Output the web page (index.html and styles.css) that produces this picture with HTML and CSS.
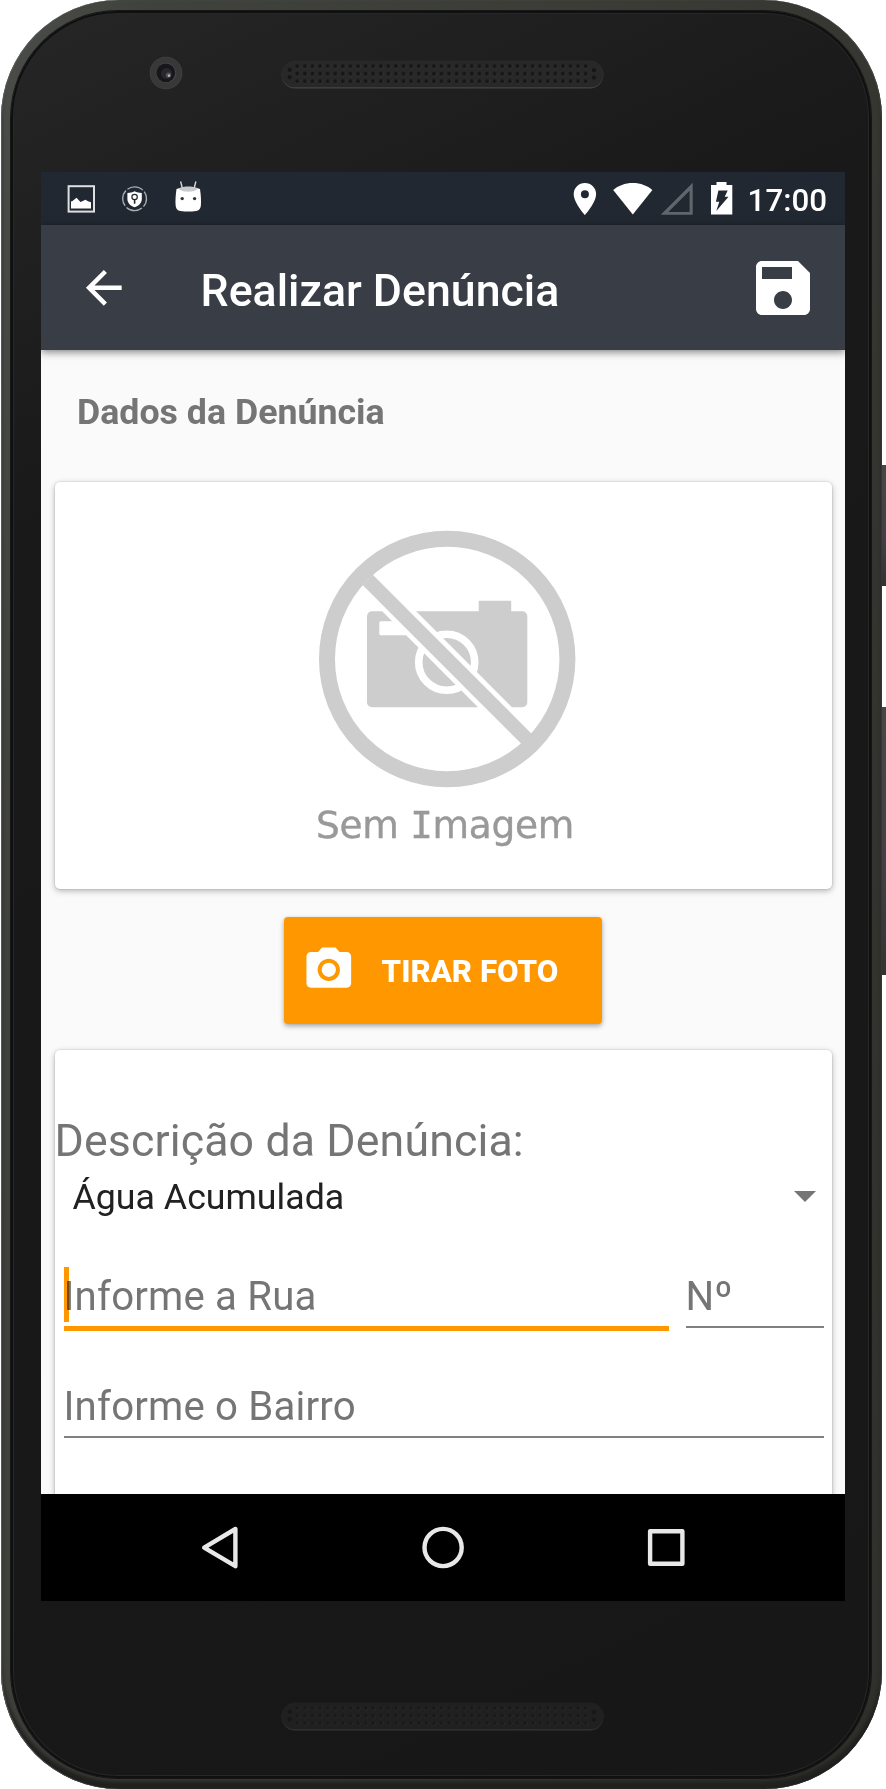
FILE: index.html
```html
<!DOCTYPE html>
<html lang="pt-BR">
<head>
<meta charset="utf-8">
<title>Realizar Denúncia</title>
<link rel="stylesheet" href="styles.css">
</head>
<body>
<div class="device">
  <span class="side-button power"></span>
  <span class="side-button volume"></span>
  <div class="face">
    <div class="bezel-top">
      <svg class="lens" width="34" height="34" viewBox="0 0 34 34">
        <circle cx="17" cy="17" r="16.3" fill="#404040"/>
        <circle cx="17" cy="17" r="15.4" fill="#383838"/>
        <circle cx="17" cy="17" r="10" fill="#4c4c4c"/>
        <circle cx="16.8" cy="16.8" r="9.4" fill="#17171a"/>
        <circle cx="17.5" cy="17.5" r="5.5" fill="#28272d"/>
        <circle cx="19.5" cy="19" r="2.6" fill="#55555a"/>
        <circle cx="20" cy="19.7" r="1.1" fill="#c8c8c8"/>
      </svg>
      <svg class="grille" width="323" height="30" viewBox="0 0 323 30">
        <defs>
          <pattern id="dots" x="12.6" y="2.4" width="7.59" height="7.55" patternUnits="userSpaceOnUse">
            <circle cx="3.9" cy="4.1" r="2.3" fill="#3b3b3b"/>
            <circle cx="3.7" cy="3.7" r="2.1" fill="#171717"/>
          </pattern>
        </defs>
        <rect x=".5" y="1.2" width="322" height="27.2" rx="13.6" fill="#444"/>
        <rect x=".5" y=".5" width="322" height="26.8" rx="13.4" fill="#282828"/>
        <rect x="12.6" y="2.4" width="296" height="22.65" fill="url(#dots)"/>
        <g fill="#171717"><circle cx="8.7" cy="9.8" r="2.1"/><circle cx="8.7" cy="17.2" r="2.1"/><circle cx="313" cy="10.2" r="2.1"/><circle cx="313" cy="17.6" r="2.1"/></g>
      </svg>
    </div>

    <div class="screen">
      <div class="status-bar">
        <svg width="804" height="53" viewBox="41 172 804 53">
          <rect x="68.6" y="186.2" width="25.4" height="25.4" fill="none" stroke="#dedfe0" stroke-width="2"/>
          <path d="M71 208.500v-7l1.500-.5 4-3.200 4 4.200 5-2.200 2.500 1.500 3 1v6.200z" fill="#fff"/>
          <circle cx="134.6" cy="198.7" r="11.9" fill="none" stroke="#adb0b4" stroke-width="1.3" stroke-dasharray="16.7 2" stroke-dashoffset="8"/>
          <path d="M134.600 191.200c-2 1.200-4.600 1.700-7.200 1.700v6c0 4 3.200 6.900 7.200 8.400 4-1.500 7.200-4.400 7.200-8.400v-6c-2.600 0-5.200-.5-7.200-1.700z" fill="#fff"/>
          <circle cx="134.6" cy="197" r="2.7" fill="none" stroke="#222831" stroke-width="1.2"/>
          <path d="M134.600 199.500v4.200" stroke="#222831" stroke-width="1.6"/>
          <path d="M180.600 181.500l2 7.500M195.900 181.500l-2 7.500" stroke="#d8d9da" stroke-width="1.4"/>
          <path d="M176.500 189c7-2.500 17.500-2.500 23.500 0q1.400 10 .9 16c-.3 4-2 5.500-4.900 6-5 .8-10.500.8-15.500 0-3-.5-4.600-2-4.900-6q-.5-6 .9-16z" fill="#fff"/>
          <path d="M178.500 188.300c6-2.300 13.800-2.300 19.500 0-1.500 4.500-18 4.500-19.500 0z" fill="#c9cacb"/>
          <circle cx="182.2" cy="198.6" r="1.7" fill="#303640"/><circle cx="194.6" cy="198.6" r="1.7" fill="#303640"/>
          <path d="M584.900 183a11.200 11.200 0 0 0-11.200 11.200c0 8.400 11.200 20.800 11.200 20.800s11.200-12.400 11.200-20.800A11.200 11.200 0 0 0 584.900 183zm0 15.200a4 4 0 1 1 0-8 4 4 0 0 1 0 8z" fill="#fff"/>
          <path d="M632.800 214.600L613.200 190c5-4.300 11.800-7 19.600-7s14.600 2.700 19.600 7z" fill="#fff"/>
          <path d="M660.700 214.800h32v-32zM668.300 212h21.300v-21.300z" fill="#61656c" fill-rule="evenodd"/>
          <path d="M716.500 182h10v3h5.800v29.600H711V185h5.500zM718.400 190.500h9.300l-3 6.300h3.800l-12.200 14.200 3-9.300h-3.400z" fill="#fff" fill-rule="evenodd"/>
        </svg>
        <span class="clock">17:00</span>
      </div>

      <header class="app-bar">
        <svg class="back" width="53.6" height="53.6" viewBox="0 0 24 24"><path fill="#fff" d="M20 11H7.830l5.590-5.590L12 4l-8 8 8 8 1.410-1.410L7.830 13H20v-2z"/></svg>
        <h1 class="title">Realizar Denúncia</h1>
        <svg class="save" width="72" height="72" viewBox="0 0 24 24"><path fill="#fff" d="M17 3H5c-1.110 0-2 .9-2 2v14c0 1.100.89 2 2 2h14c1.100 0 2-.9 2-2V7l-4-4zm-5 16c-1.660 0-3-1.340-3-3s1.340-3 3-3 3 1.340 3 3-1.340 3-3 3zm3-10H5V5h10v4z"/></svg>
      </header>

      <main class="content">
        <h2 class="section-title">Dados da Denúncia</h2>

        <section class="card photo-card">
          <svg width="260" height="260" viewBox="316 528.5 260 260">
            <g fill="#cdcdcd">
              <rect x="366" y="610.7" width="160.3" height="96" rx="5"/>
              <rect x="477.7" y="600.3" width="32.5" height="14" rx="1"/>
            </g>
            <rect x="378.3" y="620.7" width="40" height="14" rx="1.5" fill="#fff"/>
            <circle cx="445.7" cy="661.7" r="28" fill="none" stroke="#fff" stroke-width="7.6"/>
            <path d="M366.700 579.300L525.700 738.500" stroke="#fff" stroke-width="24"/>
            <path d="M366.700 579.300L525.700 738.500" stroke="#cdcdcd" stroke-width="14.4"/>
            <circle cx="446.2" cy="658.5" r="120.2" fill="none" stroke="#cdcdcd" stroke-width="16"/>
          </svg>
          <p class="caption">Sem <span class="slab">I</span>magem</p>
        </section>

        <button class="photo-button" type="button">
          <svg width="53.6" height="53.6" viewBox="0 0 24 24"><circle cx="12" cy="12" r="3.2" fill="#fff"/><path fill="#fff" d="M9 2L7.170 4H4c-1.100 0-2 .9-2 2v12c0 1.100.9 2 2 2h16c1.100 0 2-.9 2-2V6c0-1.100-.9-2-2-2h-3.170L15 2H9zm3 15c-2.760 0-5-2.240-5-5s2.240-5 5-5 5 2.240 5 5-2.240 5-5 5z"/></svg>
          <span class="photo-label">TIRAR FOTO</span>
        </button>

        <section class="card form-card">
          <div class="form-label">Descrição da Denúncia:</div>
          <div class="select">
            <span class="select-value">Água Acumulada</span>
            <svg width="22" height="11" viewBox="0 0 22 11"><path d="M0 0h22L11 11z" fill="#757575"/></svg>
          </div>
          <div class="row">
            <div class="field focused"><span class="caret"></span><span class="hint">Informe a Rua</span></div>
            <div class="field number"><span class="hint">Nº</span></div>
          </div>
          <div class="row second">
            <div class="field"><span class="hint">Informe o Bairro</span></div>
          </div>
        </section>
      </main>

      <nav class="nav-bar">
        <svg width="804" height="107" viewBox="41 1494 804 107" fill="none" stroke="#e8e8e8" stroke-width="4.4" stroke-linejoin="round">
          <path d="M235.400 1529v37.200L204.200 1547.600z"/>
          <circle cx="443.1" cy="1547.5" r="18.6"/>
          <rect x="650.1" y="1531.2" width="32.3" height="32.6"/>
        </svg>
      </nav>
    </div>

    <div class="bezel-bottom">
      <svg class="grille" width="323" height="30" viewBox="0 0 323 30">
        <rect x=".5" y="1.2" width="322" height="27.2" rx="13.6" fill="#353535"/>
        <rect x=".5" y=".5" width="322" height="26.8" rx="13.4" fill="#202020"/>
        <rect x="12.6" y="2.4" width="296" height="22.65" fill="url(#dots)" opacity=".7"/>
        <g fill="#171717"><circle cx="8.7" cy="9.8" r="2.1"/><circle cx="8.7" cy="17.2" r="2.1"/><circle cx="313" cy="10.2" r="2.1"/><circle cx="313" cy="17.6" r="2.1"/></g>
      </svg>
    </div>
  </div>
</div>
</body>
</html>
```
FILE: styles.css
```css
* { box-sizing: border-box; margin: 0; padding: 0; }

body {
  width: 886px;
  height: 1789px;
  overflow: hidden;
  background: #fff;
  font-family: Roboto, "Noto Sans", sans-serif;
}

svg { display: block; flex: none; }

.device {
  position: relative;
  width: 881px;
  height: 1789px;
  margin-left: 1px;
  padding: 11px 11px 11px 10px;
  border-radius: 118px;
  background: linear-gradient(100deg, #4b4d4a 0, #40423d 12%, #3b3c36 50%, #2f302b 100%);
  box-shadow: inset 1px 0 1px #5a5c5a, inset 0 -8px 4px #20201e, inset -1px 0 1px #4a4c48;
}

.side-button {
  position: absolute;
  left: 881px;
  width: 4px;
  background: linear-gradient(#4a4648, #453f45 60%, #333);
}
.power { top: 465px; height: 121px; }
.volume { top: 707px; height: 268px; }

.face {
  height: 1767px;
  padding: 0 27px 0 30px;
  border-radius: 107px;
  background: linear-gradient(155deg, #262626 0, #191919 24%, #171717 100%);
  box-shadow: 0 0 0 1px #161616, inset 0 0 0 2px #101010, inset 0 0 0 3px #272727;
}

.bezel-top { display: flex; height: 161px; }
.lens { margin: 45px 0 0 108px; }
.bezel-top .grille { margin: 49px 0 0 98px; }
.bezel-bottom { padding: 101px 0 0 240px; }

.screen {
  display: flex;
  flex-direction: column;
  width: 804px;
  height: 1429px;
  overflow: hidden;
  background: #fafafa;
}

.status-bar {
  position: relative;
  height: 53px;
  background: #222831;
}
.clock {
  position: absolute;
  top: 9px;
  right: 18px;
  color: #fff;
  font-size: 31.3px;
  font-weight: 500;
  line-height: 40px;
}

.app-bar {
  position: relative;
  display: flex;
  align-items: center;
  height: 125px;
  padding: 1px 26px 0 36px;
  background: #393e46;
  box-shadow: 0 2px 8px rgba(0, 0, 0, .5);
  color: #fff;
}
.title {
  flex: 1;
  margin: 5px 0 0 70px;
  font-size: 44.67px;
  font-weight: 500;
  line-height: 54px;
  white-space: nowrap;
}

.content {
  display: flex;
  flex-direction: column;
  align-items: center;
  height: 1144px;
  overflow: hidden;
}
.section-title {
  flex: none;
  align-self: flex-start;
  height: 132px;
  padding: 40px 0 0 36px;
  color: #757575;
  font-size: 35.73px;
  font-weight: 700;
  line-height: 44px;
}

.card {
  flex: none;
  width: 777px;
  border-radius: 5px;
  background: #fff;
  box-shadow: 0 0 1px 1px rgba(0, 0, 0, .06), 0 2px 6px rgba(0, 0, 0, .28);
}
.photo-card {
  display: flex;
  flex-direction: column;
  align-items: center;
  height: 407px;
  padding-top: 46.5px;
}
.photo-card svg { margin-left: 7px; }
.caption {
  margin: 13px 0 0 4px;
  color: #999;
  font-family: "DejaVu Sans", sans-serif;
  font-size: 37.5px;
  letter-spacing: -.3px;
  line-height: 46px;
  white-space: nowrap;
  -webkit-text-stroke: .4px #999;
}
.slab { font-family: "DejaVu Sans Mono", monospace; }

.photo-button {
  display: flex;
  flex: none;
  align-items: center;
  width: 318px;
  height: 107px;
  margin: 27.5px 0 26.5px;
  padding-left: 18px;
  border: 0;
  border-radius: 4px;
  background: #ff9800;
  box-shadow: 0 2px 5px rgba(0, 0, 0, .35);
  color: #fff;
  font-family: Roboto, sans-serif;
}
.photo-label {
  margin: 4px 0 0 26px;
  font-size: 31.3px;
  font-weight: 800;
  line-height: 40px;
  white-space: nowrap;
}

.form-card {
  height: 520px;
  padding-top: 65px;
}
.form-label {
  color: #757575;
  font-size: 44.67px;
  letter-spacing: .13px;
  line-height: 53px;
  white-space: nowrap;
}
.select {
  display: flex;
  align-items: center;
  justify-content: space-between;
  height: 57px;
  padding: 0 16px 0 18px;
  color: #212121;
  font-size: 35.73px;
}
.row {
  display: flex;
  align-items: flex-start;
  gap: 17px;
  margin-top: 43px;
  padding: 0 8px 0 9px;
}
.second { margin-top: 47px; }
.field {
  position: relative;
  flex: 1;
  border-bottom: 2px solid #808080;
  color: #757575;
  font-size: 40.2px;
  letter-spacing: .18px;
  line-height: 58px;
}
.focused { border-bottom: 5px solid #ff9800; }
.number { flex: none; width: 138px; }
.hint { position: relative; mix-blend-mode: multiply; }
.caret {
  position: absolute;
  top: -1px;
  left: 0;
  width: 5px;
  height: 55px;
  background: #ff9800;
}

.nav-bar { flex: none; height: 107px; background: #000; }
```
